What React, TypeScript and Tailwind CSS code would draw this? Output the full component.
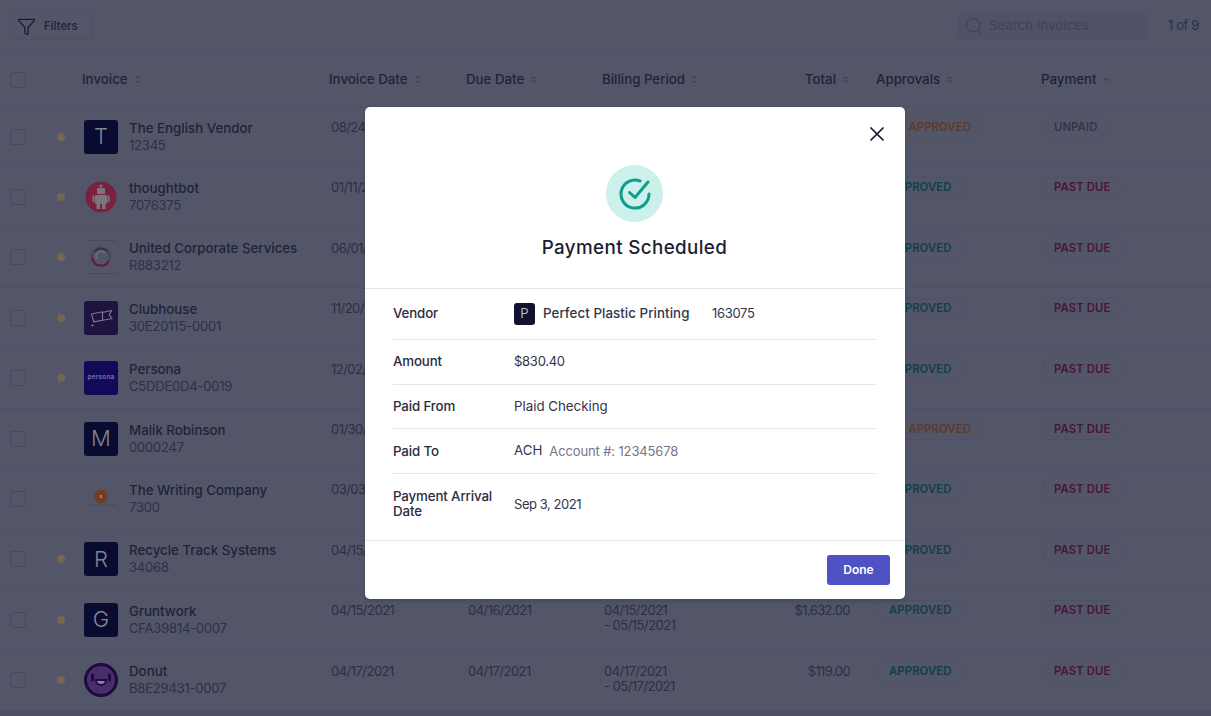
import type { ReactNode } from "react";
import { Filter, Search, X, ChevronDown, ChevronsUpDown } from "lucide-react";

type Row = {
  name: string; id: string; date: string; dot?: boolean; logo: string;
  due?: string; b1?: string; b2?: string; total?: string; orange?: boolean; unpaid?: boolean;
};

const rows: Row[] = [
  { name: "The English Vendor", id: "12345", date: "08/24/2020", logo: "T", dot: true, orange: true, unpaid: true },
  { name: "thoughtbot", id: "7076375", date: "01/11/2021", logo: "robot", dot: true },
  { name: "United Corporate Services", id: "R883212", date: "06/01/2020", logo: "united", dot: true },
  { name: "Clubhouse", id: "30E20115-0001", date: "11/20/2020", logo: "flag", dot: true },
  { name: "Persona", id: "C5DDE0D4-0019", date: "12/02/2020", logo: "persona", dot: true },
  { name: "Malik Robinson", id: "0000247", date: "01/30/2021", logo: "M", orange: true },
  { name: "The Writing Company", id: "7300", date: "03/03/2021", logo: "writing" },
  { name: "Recycle Track Systems", id: "34068", date: "04/15/2021", logo: "R", dot: true },
  { name: "Gruntwork", id: "CFA39814-0007", date: "04/15/2021", logo: "G", dot: true, due: "04/16/2021", b1: "04/15/2021", b2: "- 05/15/2021", total: "$1,632.00" },
  { name: "Donut", id: "B8E29431-0007", date: "04/17/2021", logo: "donut", dot: true, due: "04/17/2021", b1: "04/17/2021", b2: "- 05/17/2021", total: "$119.00" },
];

const cols = "grid grid-cols-[57px_27px_247px_137px_136px_246px_28px_165px_1fr]";

function Logo({ kind }: { kind: string }) {
  if (kind.length === 1)
    return <div className="w-[34px] h-[34px] rounded-[3px] bg-[#0a0b30] flex items-center justify-center text-[22px] font-light text-[#83858f]">{kind}</div>;
  if (kind === "robot")
    return (
      <svg width="34" height="34" viewBox="0 0 34 34" className="block">
        <circle cx="17" cy="17" r="15.5" fill="#7a2140" />
        <g fill="#7a7480">
          <rect x="13" y="8" width="8" height="6" rx="1" />
          <rect x="11" y="15" width="12" height="9" rx="1" />
          <rect x="8.5" y="15.5" width="2" height="7" rx="1" />
          <rect x="23.5" y="15.5" width="2" height="7" rx="1" />
          <rect x="12.5" y="24" width="3.5" height="5" />
          <rect x="18" y="24" width="3.5" height="5" />
          <circle cx="17" cy="6" r="1.5" />
        </g>
      </svg>
    );
  if (kind === "united")
    return (
      <svg width="34" height="34" viewBox="0 0 34 34" className="block">
        <path d="M2 0.5H32M2 33.5H32" stroke="#43465a" strokeWidth="0.7" />
        <circle cx="17" cy="17" r="9" fill="none" stroke="#45485c" strokeWidth="2.5" />
        <path d="M8.5 18a8.5 8.5 0 0 0 16 3" fill="none" stroke="#602036" strokeWidth="2.2" />
        <path d="M11 12a8 8 0 0 1 12-1" fill="none" stroke="#34374a" strokeWidth="2.4" />
        <path d="M13 19a5 5 0 0 1 8-6" fill="none" stroke="#6e6f82" strokeWidth="1.6" />
      </svg>
    );
  if (kind === "flag")
    return (
      <svg width="34" height="34" viewBox="0 0 34 34" className="block">
        <rect width="34" height="34" rx="3" fill="#1f1340" />
        <path d="M7.5 13l11-2.2v8.4l-8.7 1.6zM18.5 11.5l9-2-2.3 4.5 2.8 3.7-9.5 1.5" fill="none" stroke="#7e7a8f" strokeWidth="1.1" />
        <circle cx="8.5" cy="24.5" r="1.1" fill="#7e7a8f" />
      </svg>
    );
  if (kind === "persona")
    return <div className="w-[34px] h-[34px] rounded-[3px] bg-[#140858] flex items-center justify-center text-[6.5px] font-bold tracking-[0.02em] text-[#6f6ba0]">persona</div>;
  if (kind === "writing")
    return (
      <svg width="34" height="34" viewBox="0 0 34 34" className="block">
        <circle cx="17" cy="14.5" r="7" fill="#743e25" />
        <rect x="15.8" y="13" width="2" height="3" fill="#9a8072" />
        <rect x="2" y="22.5" width="30" height="1.2" fill="#494c60" />
      </svg>
    );
  return (
    <svg width="34" height="34" viewBox="0 0 34 34" className="block">
      <circle cx="17" cy="17" r="15.5" fill="#4a2e6c" stroke="#1b0c3e" strokeWidth="3" />
      <path d="M8.5 12v5M25.5 12v5" stroke="#1b0c3e" strokeWidth="3" strokeLinecap="round" />
      <path d="M12 17h10a5 5 0 0 1-10 0z" fill="#8a8696" stroke="#1b0c3e" strokeWidth="2" />
    </svg>
  );
}

function Head({ label, down, className = "" }: { label: string; down?: boolean; className?: string }) {
  return (
    <div className={`flex items-center gap-[5px] ${className}`}>
      <span>{label}</span>
      {down ? <ChevronDown size={9} strokeWidth={2} /> : <ChevronsUpDown size={9} strokeWidth={1.8} />}
    </div>
  );
}

function Badge({ children, color }: { children: string; color: string }) {
  return (
    <span className={`inline-flex h-[21px] items-center px-[10px] rounded-[3px] border border-[#4f5266] text-[11.3px] font-semibold tracking-[0.01em] ${color}`}>
      {children}
    </span>
  );
}

function Box() {
  return <div className="w-[16px] h-[16px] rounded-[3px] border border-[#464a5e] ml-[9.5px]" />;
}

function Detail({ label, children, className = "" }: { label: string; children: ReactNode; className?: string }) {
  return (
    <div className={`flex items-center border-b border-[#e4e5ea] last:border-b-0 ${className}`}>
      <div className="w-[121px] font-medium text-[#2a2c40] leading-[15px] tracking-[-0.01em]">{label}</div>
      <div className="flex items-center text-[#33354a]">{children}</div>
    </div>
  );
}

export default function App() {
  return (
    <div className="relative h-[716px] w-[1211px] overflow-hidden bg-[#535669] text-[13.3px] text-[#2b2e46] font-['Inter','Liberation_Sans',sans-serif]">
      <div className="h-[53px] flex items-center border-b border-[#4e5165] pl-[10px] pr-[12px]">
        <button className="h-[28px] w-[83px] flex items-center gap-[8px] pl-[6px] rounded-[3px] border border-[#4e5165] text-[11.2px] font-semibold text-[#24273f]">
          <Filter size={19} strokeWidth={1.6} className="text-[#171a33]" />
          Filters
        </button>
        <div className="ml-auto h-[28px] w-[189px] flex items-center gap-[5px] pl-[6px] rounded-[3px] bg-[#505367] text-[#3f4257]">
          <Search size={20} strokeWidth={1.4} />
          Search Invoices
        </div>
        <div className="ml-[21px] w-[31px] whitespace-nowrap text-[13px] tracking-[-0.03em] text-[#2b2e46]">1 of 9</div>
      </div>

      <div className={`${cols} h-[54px] items-center border-b border-[#4e5165] font-medium text-[#1f2239]`}>
        <Box />
        <div />
        <Head label="Invoice" className="-ml-[2px]" />
        <Head label="Invoice Date" className="-ml-[2px]" />
        <Head label="Due Date" className="-ml-[2px]" />
        <div className="-ml-[2px] flex justify-between">
          <Head label="Billing Period" />
          <Head label="Total" />
        </div>
        <div />
        <Head label="Approvals" className="-ml-[2px]" />
        <Head label="Payment" down className="-ml-[2px]" />
      </div>

      {rows.map((r) => (
        <div key={r.name} className={`${cols} h-[60.4px] border-b border-[#4e5165] items-center`}>
          <Box />
          <div>{r.dot && <span className="block w-[8px] h-[8px] rounded-full bg-[#75674e]" />}</div>
          <div className="flex items-center gap-[11px]">
            <Logo kind={r.logo} />
            <div className="leading-[17px]">
              <div className="font-medium text-[#1f2239]">{r.name}</div>
              <div className="text-[13px] tracking-[-0.015em] text-[#2d3048]">{r.id}</div>
            </div>
          </div>
          <div className="self-start pt-[13px] leading-[15px] text-[13px] tracking-[-0.04em]">{r.date}</div>
          <div className="self-start pt-[13px] leading-[15px] text-[13px] tracking-[-0.04em]">{r.due}</div>
          <div className="self-start pt-[13px] leading-[15px] text-[13px] tracking-[-0.04em] flex justify-between">
            <div>
              <div>{r.b1}</div>
              <div>{r.b2}</div>
            </div>
            <div className="tracking-[-0.045em]">{r.total}</div>
          </div>
          <div />
          <div className="self-start pt-[10px]">
            <Badge color={r.orange ? "text-[#5c3a26]" : "text-[#123e48]"}>{r.orange ? "1/2 APPROVED" : "APPROVED"}</Badge>
          </div>
          <div className="self-start pt-[10px]">
            <Badge color={r.unpaid ? "text-[#32354b]" : "text-[#4a1436]"}>{r.unpaid ? "UNPAID" : "PAST DUE"}</Badge>
          </div>
        </div>
      ))}
      <div className="h-[8px] bg-[#4d5063]" />

      <div className="absolute left-[365px] top-[107px] w-[540px] h-[492px] rounded-[5px] bg-white flex flex-col shadow-md">
        <button className="absolute right-[16px] top-[15px] text-[#15172c]">
          <X size={24} strokeWidth={1.7} />
        </button>
        <div className="h-[183px] flex flex-col items-center border-b border-[#e4e5ea] pt-[58px]">
          <div className="w-[57px] h-[57px] mr-[1px] rounded-full bg-[#ccf0ea] flex items-center justify-center">
            <svg width="32" height="32" viewBox="0 0 32 32" fill="none" stroke="#0f9d8d" strokeWidth="3" strokeLinecap="round" strokeLinejoin="round">
              <path d="M30 16a14 14 0 1 1-9-13" />
              <path d="M10.5 14.5l5.5 5L29 4" />
            </svg>
          </div>
          <div className="mt-[13px] mr-[1px] text-[18.8px] font-medium leading-[26px] tracking-[0.02em] text-[#1c1e33]">Payment Scheduled</div>
        </div>
        <div className="pl-[28px] pr-[29px] flex-1">
          <Detail label="Vendor" className="h-[51px] pb-[1px]">
            <span className="w-[21px] h-[22px] rounded-[3px] bg-[#11132e] text-[#b8b9c4] flex items-center justify-center text-[13px]">P</span>
            <span className="ml-[8px] font-medium w-[169px] tracking-[0.005em]">Perfect Plastic Printing</span>
            <span className="text-[13px] tracking-[-0.025em]">163075</span>
          </Detail>
          <Detail label="Amount" className="h-[45px] pb-[1px]"><span className="text-[13px] tracking-[-0.02em]">$830.40</span></Detail>
          <Detail label="Paid From" className="h-[44px]">Plaid Checking</Detail>
          <Detail label="Paid To" className="h-[45px]">
            <span>ACH</span>
            <span className="ml-[7px] text-[13px] tracking-[-0.01em] text-[#74768a]">Account #: 12345678</span>
          </Detail>
          <Detail label="Payment Arrival Date" className="h-[66px] pb-[6px]"><span className="text-[13px] tracking-[-0.035em]">Sep 3, 2021</span></Detail>
        </div>
        <div className="h-[59px] border-t border-[#e4e5ea] flex items-center justify-end pr-[15px]">
          <button className="w-[63px] h-[30px] rounded-[3px] bg-[#4f52c4] text-white text-[12px] font-semibold">Done</button>
        </div>
      </div>
    </div>
  );
}
